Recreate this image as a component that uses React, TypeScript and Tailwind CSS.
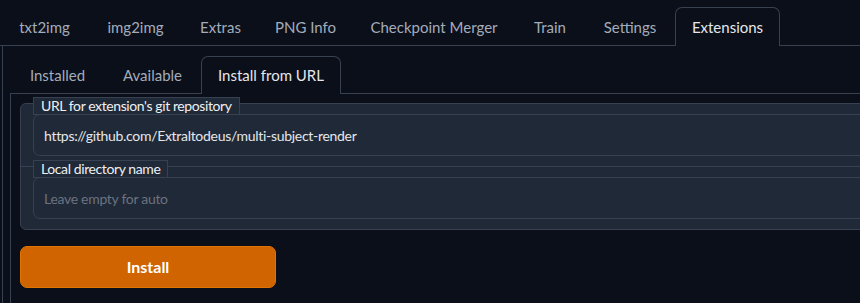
import React from "react";

const mainTabs = [
  { label: "txt2img", w: "w-[87px]" },
  { label: "img2img", w: "w-[95px]" },
  { label: "Extras", w: "w-[75px]" },
  { label: "PNG Info", w: "w-[95px]" },
  { label: "Checkpoint Merger", w: "w-[162px]" },
  { label: "Train", w: "w-[70px]" },
  { label: "Settings", w: "w-[90px]" },
  { label: "Extensions", w: "w-[105px]", active: true },
];

const subTabs = [
  { label: "Installed", w: "w-[93px]" },
  { label: "Available", w: "w-[97px]" },
  { label: "Install from URL", w: "w-[140px]", active: true },
];

function Field({ label, value, placeholder, first }: { label: string; value?: string; placeholder?: string; first?: boolean }) {
  return (
    <div className={`relative pl-[12px] pt-[10px] pb-[10px] ${first ? "" : "border-t border-[#374151]"}`}>
      <span className="absolute left-[12px] top-[-7px] h-[18px] border border-[#374151] bg-[#1f2937] px-[7px] text-[14px] leading-[16px] tracking-[-0.4px] text-[#eef0f3]">
        {label}
      </span>
      <div className="h-[42px] rounded-[7px] border border-[#374151] bg-[#1f2937] px-[10px] flex items-center text-[14px] tracking-[-0.3px]">
        {value ? (
          <span className="text-[#e5e7eb]">{value}</span>
        ) : (
          <span className="text-[#6b7280]">{placeholder}</span>
        )}
      </div>
    </div>
  );
}

export default function App() {
  return (
    <div
      className="w-[860px] h-[303px] overflow-hidden bg-[#0b0f19]"
      style={{ fontFamily: "Lato, 'Noto Sans', sans-serif" }}
    >
      <div className="flex items-end pt-[7px] pl-px border-b border-[#374151]">
        {mainTabs.map((t) => (
          <div
            key={t.label}
            className={`${t.w} h-[39px] -mb-px flex items-center justify-center text-[15px] rounded-t-[7px] border border-b-0 ${
              t.active ? "border-[#374151] bg-[#0b0f19] text-[#e5e7eb]" : "border-transparent text-[#a3acbb]"
            }`}
          >
            {t.label}
          </div>
        ))}
      </div>
      <div className="ml-[2px] border-l border-[#374151] pl-[7px] pt-[10px] h-[300px]">
        <div className="flex items-end pl-px border-b border-[#374151]">
          {subTabs.map((t) => (
            <div
              key={t.label}
              className={`${t.w} h-[38px] -mb-px flex items-center justify-center text-[15px] rounded-t-[7px] border border-b-0 ${
                t.active ? "border-[#374151] bg-[#0b0f19] text-[#e5e7eb]" : "border-transparent text-[#a3acbb]"
              }`}
            >
              {t.label}
            </div>
          ))}
        </div>
        <div className="border-l border-[#374151] pl-[9px] pt-[9px] h-[250px]">
          <div className="mr-[-40px] rounded-[6px] border border-[#374151] bg-[#1f2937]">
            <Field first label="URL for extension's git repository" value="https://github.com/Extraltodeus/multi-subject-render" />
            <Field label="Local directory name" placeholder="Leave empty for auto" />
          </div>
          <button className="mt-[16px] w-[256px] h-[42px] rounded-[7px] border border-[#e07400] bg-[#cf6400] text-white font-bold text-[16px]">
            Install
          </button>
        </div>
      </div>
    </div>
  );
}
